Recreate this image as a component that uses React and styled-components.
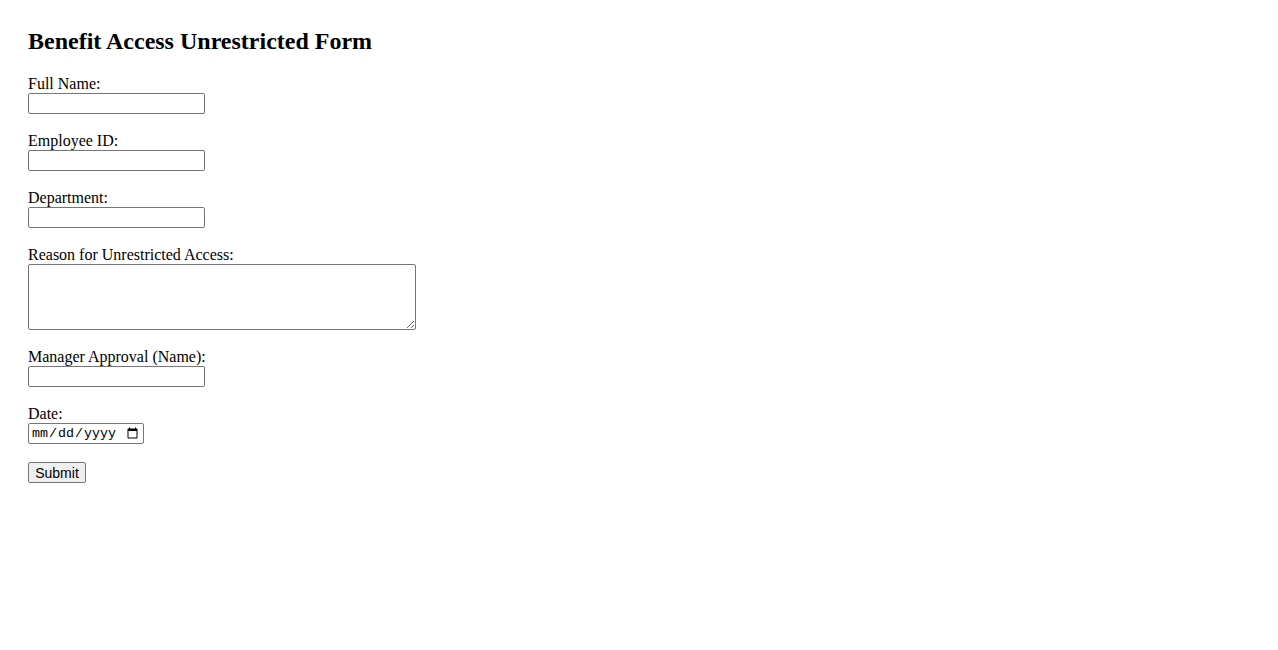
import React from "react"
import styled, { createGlobalStyle } from "styled-components"

const GlobalStyle = createGlobalStyle`
  body {
    margin: 8px;
    background: #fff;
    color: #000;
    font-family: "Liberation Serif", "Times New Roman", serif;
    font-size: 16px;
  }
`

const Page = styled.div`
  padding: 20px;
`

const Title = styled.h2`
  font-size: 24px;
  font-weight: bold;
  margin: 0 0 20px;
`

const Label = styled.label`
  font-size: 16px;
`

const TextInput = styled.input`
  box-sizing: border-box;
  width: 177px;
  height: 21px;
  margin: 0;
  padding: 1px 2px;
  border: 1px solid #767676;
  border-radius: 2px;
  font-family: "Liberation Sans", Arial, sans-serif;
  font-size: 13.33px;
`

const DateInput = styled(TextInput)`
  width: 116px;
  font-family: "Liberation Mono", "Courier New", monospace;
`

const TextArea = styled.textarea`
  box-sizing: border-box;
  width: 388px;
  height: 66px;
  margin: 0;
  padding: 2px;
  border: 1px solid #767676;
  border-radius: 2px;
  vertical-align: bottom;
  font-family: "Liberation Mono", monospace;
  font-size: 13.33px;
`

const SubmitButton = styled.button`
  box-sizing: border-box;
  width: 58px;
  height: 21px;
  padding: 1px 6px;
  margin: 0;
  border: 1px solid #767676;
  border-radius: 2px;
  background: #efefef;
  color: #000;
  font-family: "Liberation Sans", Arial, sans-serif;
  font-size: 14px;
`

const fields = [
  { id: "fullName", label: "Full Name:" },
  { id: "employeeId", label: "Employee ID:" },
  { id: "department", label: "Department:" },
]

export default function App() {
  return (
    <Page>
      <GlobalStyle />
      <Title>Benefit Access Unrestricted Form</Title>
      <form onSubmit={(e) => e.preventDefault()}>
        {fields.map((f) => (
          <React.Fragment key={f.id}>
            <Label htmlFor={f.id}>{f.label}</Label>
            <br />
            <TextInput type="text" id={f.id} name={f.id} />
            <br />
            <br />
          </React.Fragment>
        ))}

        <Label htmlFor="reason">Reason for Unrestricted Access:</Label>
        <br />
        <TextArea id="reason" name="reason" />
        <br />
        <br />

        <Label htmlFor="manager">Manager Approval (Name):</Label>
        <br />
        <TextInput type="text" id="manager" name="manager" />
        <br />
        <br />

        <Label htmlFor="date">Date:</Label>
        <br />
        <DateInput type="date" id="date" name="date" />
        <br />
        <br />

        <SubmitButton type="submit">Submit</SubmitButton>
      </form>
    </Page>
  )
}
